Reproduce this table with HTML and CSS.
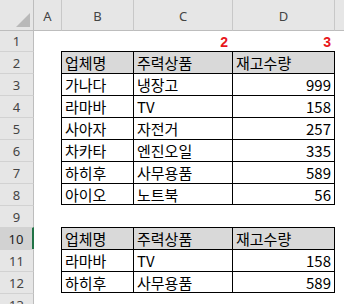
FILE: index.html
```html
<!DOCTYPE html>
<html lang="ko">
<head>
<meta charset="utf-8">
<link rel="stylesheet" href="styles.css">
</head>
<body>
<div class="sheet">
  <div class="corner"><span class="tri"></span></div>
  <div class="ch">A</div>
  <div class="ch bl">B</div>
  <div class="ch bl">C</div>
  <div class="ch bl br">D</div>
  <div class="ch"></div>

  <div class="rh first">1</div><div></div><div></div><div class="mark">2</div><div class="mark">3</div><div></div>

  <div class="rh">2</div><div></div><div class="t th">업체명</div><div class="t th">주력상품</div><div class="t th r">재고수량</div><div></div>
  <div class="rh">3</div><div></div><div class="t">가나다</div><div class="t">냉장고</div><div class="t r num">999</div><div></div>
  <div class="rh">4</div><div></div><div class="t">라마바</div><div class="t">TV</div><div class="t r num">158</div><div></div>
  <div class="rh">5</div><div></div><div class="t">사아자</div><div class="t">자전거</div><div class="t r num">257</div><div></div>
  <div class="rh">6</div><div></div><div class="t">차카타</div><div class="t">엔진오일</div><div class="t r num">335</div><div></div>
  <div class="rh">7</div><div></div><div class="t">하히후</div><div class="t">사무용품</div><div class="t r num">589</div><div></div>
  <div class="rh">8</div><div></div><div class="t b">아이오</div><div class="t b">노트북</div><div class="t r b num">56</div><div></div>
  <div class="rh">9</div><div></div><div></div><div></div><div></div><div></div>
  <div class="rh sel">10</div><div></div><div class="t th">업체명</div><div class="t th">주력상품</div><div class="t th r">재고수량</div><div></div>
  <div class="rh">11</div><div></div><div class="t">라마바</div><div class="t">TV</div><div class="t r num">158</div><div></div>
  <div class="rh">12</div><div></div><div class="t b">하히후</div><div class="t b">사무용품</div><div class="t r b num">589</div><div class="pastecell"><span class="paste"></span></div>
  <div class="rh">13</div><div></div><div></div><div></div><div></div><div></div>
</div>
</body>
</html>
```

FILE: styles.css
```css
html, body {
  margin: 0;
  padding: 0;
  background: #ffffff;
  overflow: hidden;
}
.sheet {
  width: 344px;
  height: 304px;
  overflow: hidden;
  display: grid;
  grid-template-columns: 34px 27px 72px 99px 103px 1fr;
  grid-template-rows: 31px 20px repeat(12, 22px);
  font-family: "Noto Sans CJK KR", "Noto Sans", sans-serif;
  font-size: 15px;
  color: #000;
}
.sheet > div {
  box-sizing: border-box;
  min-width: 0;
  overflow: hidden;
  white-space: nowrap;
}
.corner {
  background: #e6e6e6;
  border-right: 1px solid #bdbdbd;
  border-bottom: 1px solid #bdbdbd;
  position: relative;
}
.tri {
  position: absolute;
  right: 3px;
  bottom: 3px;
  width: 0;
  height: 0;
  border-left: 14px solid transparent;
  border-bottom: 14px solid #b9b9b9;
}
.ch {
  background: #e6e6e6;
  border-bottom: 1px solid #bdbdbd;
  font-family: "Noto Sans", "Open Sans", sans-serif;
  font-size: 13px;
  color: #444;
  display: flex;
  align-items: center;
  justify-content: center;
  padding-top: 2px;
}
.ch.bl { border-left: 1px solid #c8c8c8; }
.ch.br { border-right: 1px solid #c8c8c8; }
.rh {
  background: #e6e6e6;
  border-right: 1px solid #bdbdbd;
  border-top: 1px solid #d2d2d2;
  font-family: "Noto Sans", "Open Sans", sans-serif;
  font-size: 13px;
  color: #444;
  display: flex;
  align-items: center;
  justify-content: center;
}
.rh.first { border-top: none; }
.rh.sel {
  background: #d2d2d2;
  border-right: 2px solid #217346;
  color: #222;
}
.mark {
  color: #e8161b;
  font-family: "Liberation Sans", sans-serif;
  font-weight: bold;
  font-size: 14px;
  text-align: right;
  padding-right: 4px;
  line-height: 20px;
  padding-top: 1px;
}
.t {
  border-left: 1px solid #000;
  border-top: 1px solid #000;
  line-height: 21px;
  padding-left: 3px;
  padding-right: 3px;
}
.t.r { border-right: 1px solid #000; }
.t.b { border-bottom: 1px solid #000; }
.t.th { background: #d9d9d9; }
.t.num { text-align: right; }
.pastecell {
  position: relative;
  overflow: visible;
}
.paste {
  position: absolute;
  left: 2px;
  top: 24px;
  width: 12px;
  height: 12px;
  box-sizing: border-box;
  border: 1px solid #9b9b9b;
  background: #fff;
}
.paste::after {
  content: "";
  position: absolute;
  left: 2px;
  top: 2px;
  width: 6px;
  height: 5px;
  background: #4a7fc1;
}
```
